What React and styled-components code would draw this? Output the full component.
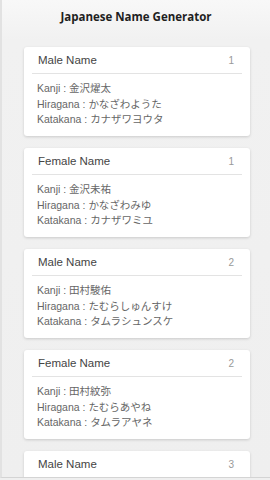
import React from 'react';
import styled, { createGlobalStyle } from 'styled-components';

const GlobalStyle = createGlobalStyle`
  html, body {
    margin: 0;
    padding: 0;
    background: #efefef;
  }
`;

const Page = styled.div`
  width: 270px;
  height: 478px;
  box-sizing: border-box;
  border-left: 2px solid #e2e2e2;
  border-bottom: 1px solid #d4d4d4;
  background: linear-gradient(#f8f8f8 0, #f1f1f1 40px, #efefef 100%);
  overflow: hidden;
  font-family: "Liberation Sans", Arial, "Noto Sans CJK JP", sans-serif;
`;

const Title = styled.h1`
  margin: 0;
  height: 33px;
  line-height: 33px;
  text-align: center;
  font-family: "Open Sans", "Liberation Sans", sans-serif;
  font-size: 11.5px;
  font-weight: 700;
  color: #1f1f1f;
`;

const List = styled.div`
  display: flex;
  flex-direction: column;
  gap: 12px;
  padding: 14px 20px 0 22px;
`;

const Card = styled.div`
  background: #fff;
  border-radius: 3px;
  box-shadow: 0 1px 3px rgba(0, 0, 0, 0.16);
  height: 89px;
  flex-shrink: 0;
`;

const CardHeader = styled.div`
  display: flex;
  justify-content: space-between;
  align-items: center;
  height: 26px;
  margin: 0 8px;
  padding: 0 8px 0 6px;
  border-bottom: 1px solid #e3e3e3;
`;

const CardTitle = styled.span`
  font-size: 11.5px;
  color: #444;
`;

const CardIndex = styled.span`
  font-size: 10px;
  color: #999;
`;

const CardBody = styled.div`
  padding: 7px 13px 0;
`;

const Line = styled.div`
  font-size: 10.5px;
  line-height: 15.5px;
  color: #666;
  white-space: nowrap;
`;

const names = [
  { type: 'Male Name', n: 1, kanji: '金沢燿太', hira: 'かなざわようた', kata: 'カナザワヨウタ' },
  { type: 'Female Name', n: 1, kanji: '金沢未祐', hira: 'かなざわみゆ', kata: 'カナザワミユ' },
  { type: 'Male Name', n: 2, kanji: '田村駿佑', hira: 'たむらしゅんすけ', kata: 'タムラシュンスケ' },
  { type: 'Female Name', n: 2, kanji: '田村紋弥', hira: 'たむらあやね', kata: 'タムラアヤネ' },
  { type: 'Male Name', n: 3 },
];

const NameCard = ({ item }) => (
  <Card>
    <CardHeader>
      <CardTitle>{item.type}</CardTitle>
      <CardIndex>{item.n}</CardIndex>
    </CardHeader>
    {item.kanji && (
      <CardBody>
        <Line>Kanji : {item.kanji}</Line>
        <Line>Hiragana : {item.hira}</Line>
        <Line>Katakana : {item.kata}</Line>
      </CardBody>
    )}
  </Card>
);

export default function App() {
  return (
    <>
      <GlobalStyle />
      <Page>
        <Title>Japanese Name Generator</Title>
        <List>
          {names.map((item, i) => (
            <NameCard key={i} item={item} />
          ))}
        </List>
      </Page>
    </>
  );
}
